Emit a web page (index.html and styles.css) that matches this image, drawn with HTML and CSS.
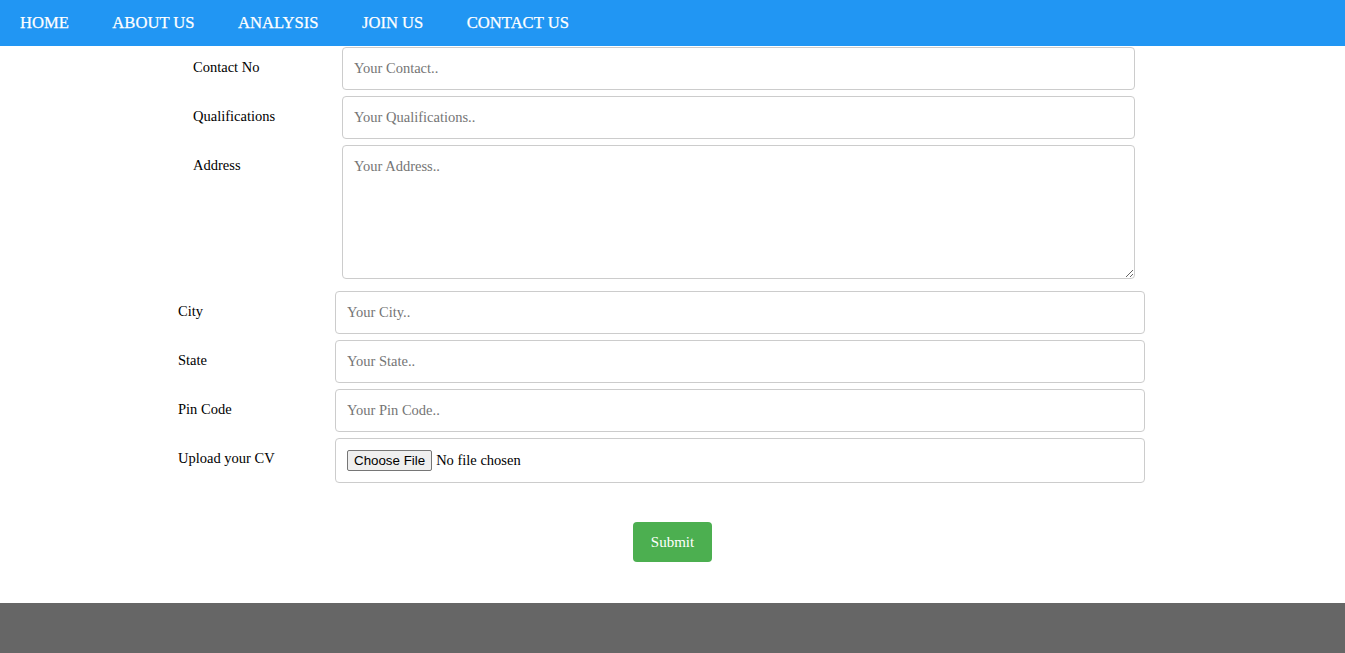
FILE: index.html
```html
<!DOCTYPE html>
<html lang="en">
<head>
<meta charset="utf-8">
<title>Join Us</title>
<link rel="stylesheet" href="styles.css">
</head>
<body>
<nav class="topnav">
  <a href="#" class="nav-link">HOME</a>
  <a href="#" class="nav-link">ABOUT US</a>
  <a href="#" class="nav-link">ANALYSIS</a>
  <a href="#" class="nav-link">JOIN US</a>
  <a href="#" class="nav-link">CONTACT US</a>
</nav>
<main class="page">
  <form class="join-form">
    <div class="group group-a">
      <div class="row">
        <label class="label">Contact No</label>
        <input class="field" type="text" placeholder="Your Contact..">
      </div>
      <div class="row">
        <label class="label">Qualifications</label>
        <input class="field" type="text" placeholder="Your Qualifications..">
      </div>
      <div class="row">
        <label class="label">Address</label>
        <textarea class="field field-area" placeholder="Your Address.."></textarea>
      </div>
    </div>
    <div class="group group-b">
      <div class="row">
        <label class="label">City</label>
        <input class="field" type="text" placeholder="Your City..">
      </div>
      <div class="row">
        <label class="label">State</label>
        <input class="field" type="text" placeholder="Your State..">
      </div>
      <div class="row">
        <label class="label">Pin Code</label>
        <input class="field" type="text" placeholder="Your Pin Code..">
      </div>
      <div class="row">
        <label class="label">Upload your CV</label>
        <input class="field field-file" type="file">
      </div>
    </div>
    <div class="actions">
      <button type="button" class="submit">Submit</button>
    </div>
  </form>
</main>
<footer class="footer"></footer>
</body>
</html>
```

FILE: styles.css
```css
* { box-sizing: border-box; }

html, body {
  margin: 0;
  padding: 0;
  background: #ffffff;
}

body {
  font-family: "Liberation Serif", "Times New Roman", serif;
  color: #000;
  font-size: 14.5px;
}

.topnav {
  display: flex;
  align-items: center;
  height: 46px;
  background: #2196F3;
  gap: 3.5px;
}

.nav-link {
  display: block;
  padding: 0 20px;
  color: #ffffff;
  text-decoration: none;
  font-size: 16.6px;
  line-height: 46px;
  -webkit-text-stroke: 0.25px #ffffff;
}

.page {
  padding-top: 1px;
}

.group {
  display: flex;
  flex-direction: column;
  gap: 6px;
}

.group-a {
  padding-left: 193px;
}

.group-a .label { width: 149px; }
.group-a .field { width: 793px; }

.group-b {
  margin-top: 12px;
  padding-left: 178px;
}

.group-b .label { width: 157px; }
.group-b .field { width: 810px; }

.row {
  display: flex;
  align-items: flex-start;
}

.label {
  padding-top: 12px;
  line-height: 17px;
  font-size: 14.5px;
  flex: none;
}

.field {
  flex: none;
  height: 43px;
  margin: 0;
  padding: 12px 11px;
  border: 1px solid #cccccc;
  border-radius: 4px;
  font-family: "Liberation Serif", "Times New Roman", serif;
  font-size: 14.5px;
  line-height: 17px;
  color: #000;
  background: #fff;
  outline: none;
}

.field::placeholder {
  color: #757575;
}

.field-area {
  height: 134px;
  resize: vertical;
  display: block;
}

.field-file {
  height: 45px;
  padding: 11px 11px;
  font-size: 14.5px;
}

.field-file::file-selector-button {
  font-family: "Liberation Sans", Arial, sans-serif;
  font-size: 13.33px;
  color: #000;
  background: #efefef;
  border: 1px solid #767676;
  border-radius: 2px;
  padding: 1px 6px;
  margin: 0 4px 0 0;
  height: 21px;
}

.actions {
  display: flex;
  justify-content: center;
  padding-top: 39px;
  padding-bottom: 41px;
}

.submit {
  width: 79px;
  height: 40px;
  border: none;
  border-radius: 4px;
  background: #4CAF50;
  color: #ffffff;
  font-family: "Liberation Serif", "Times New Roman", serif;
  font-size: 15px;
  cursor: pointer;
}

.footer {
  height: 120px;
  background: #666666;
}
```
